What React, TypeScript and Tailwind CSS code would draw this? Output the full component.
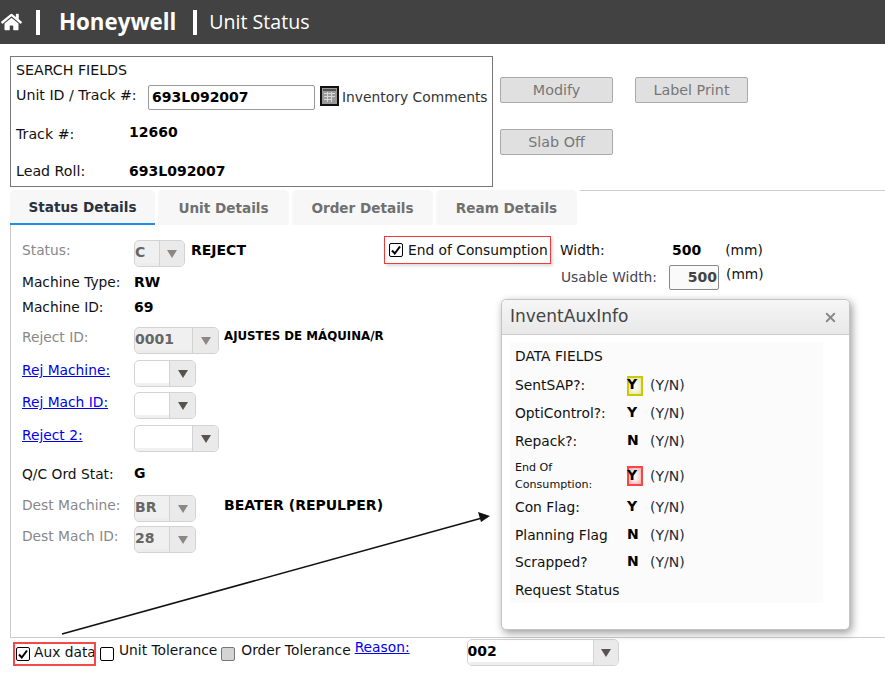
import { FaHome } from "react-icons/fa";
import { X } from "lucide-react";

const font = "font-['DejaVu_Sans',Verdana,sans-serif]";

function Combo({ value, width, arrowAt, disabled }: { value?: string; width: string; arrowAt: string; disabled?: boolean }) {
  return (
    <div className={`flex h-[27px] shrink-0 overflow-hidden rounded-[5px] border border-[#d3d3d3] ${width} ${disabled ? "bg-[#f0f0f0]" : "bg-white"}`}>
      <div className={`flex items-center border-b-[3px] text-[14px] font-bold ${arrowAt} ${disabled ? "border-[#ececec] text-[#666]" : "border-[#f0f0f0] text-black"}`}>{value}</div>
      <div className="flex flex-1 items-center justify-center border-l border-[#d3d3d3] bg-[#eaeaea]">
        <span className={`mt-px h-0 w-0 border-x-[5px] border-t-[8px] border-x-transparent ${disabled ? "border-t-[#8c8783]" : "border-t-[#59534e]"}`} />
      </div>
    </div>
  );
}

function Check({ checked, grey }: { checked?: boolean; grey?: boolean }) {
  return (
    <span className={`flex h-[14px] w-[14px] shrink-0 items-center justify-center rounded-[2px] border ${grey ? "border-[#777] bg-[#d4d4d4]" : "border-black bg-white"}`}>
      {checked && (
        <svg viewBox="0 0 12 12" className="h-3 w-3">
          <path d="M2 6.5 L4.8 9.5 L10 2.5" fill="none" stroke="black" strokeWidth="2" />
        </svg>
      )}
    </span>
  );
}

function AuxRow({ label, value, box, rowClass }: { label: React.ReactNode; value: string; box?: string; rowClass: string }) {
  return (
    <div className={`flex items-center ${rowClass}`}>
      <div className="w-[112px] shrink-0">{label}</div>
      <div className={`flex h-[20px] w-[16px] shrink-0 items-center pb-[2px] text-[14px] font-bold text-black ${box ?? ""}`}>{value}</div>
      <div className="ml-[7px] text-[14px] text-[#1d2a3a]">(Y/N)</div>
    </div>
  );
}

const tabs = ["Unit Details", "Order Details", "Ream Details"];

export default function App() {
  return (
    <div className={`relative h-[690px] w-[885px] overflow-hidden bg-white text-[13.8px] text-[#111] ${font}`}>
      <header className="flex h-[44px] items-center bg-[#424242] text-white">
        <FaHome className="ml-px h-[20px] w-[21px]" />
        <span className="ml-[14px] h-[25px] w-[4px] bg-white" />
        <span className="ml-[19px] font-['Open_Sans',sans-serif] text-[22.3px] font-bold">Honeywell</span>
        <span className="ml-[17px] h-[25px] w-[4px] bg-white" />
        <span className="ml-[12px] font-['Open_Sans',sans-serif] text-[19.6px]">Unit Status</span>
      </header>

      <section className="ml-[10px] mt-[12px] flex h-[131px]">
        <div className="w-[483px] shrink-0 border border-[#777] pl-[5px] text-[14.2px]">
          <div className="mt-[4px] leading-[19px]">SEARCH FIELDS</div>
          <div className="mt-[5px] flex items-center">
            <span className="w-[132px] shrink-0 pb-[3px] whitespace-nowrap">Unit ID / Track #:</span>
            <div className="flex h-[25px] w-[167px] shrink-0 items-center rounded-[2px] border border-[#999] pl-[3px] text-[14px] font-bold text-black">693L092007</div>
            <svg viewBox="0 0 19 20" className="ml-[5px] -mt-[3px] h-[20px] w-[19px] shrink-0">
              <rect width="19" height="20" fill="#111" />
              <rect x="2" y="2" width="15" height="16" fill="#9a9a9a" />
              <rect x="3" y="3" width="13" height="2" fill="#555" />
              <path d="M4 7.5h11M4 10.5h11M4 13.5h8M7.5 6v10M11.5 6v10" stroke="#d8d8d8" strokeWidth="1" />
            </svg>
            <span className="ml-[3px] -mt-[1px] whitespace-nowrap text-[13.85px] text-[#333]">Inventory Comments</span>
          </div>
          <div className="mt-[11px] flex h-[24px] items-center">
            <span className="w-[113px] shrink-0 pt-[3px]">Track #:</span>
            <span className="-mt-[1px] text-[14px] font-bold text-black">12660</span>
          </div>
          <div className="mt-[14px] flex h-[24px] items-center">
            <span className="w-[113px] shrink-0 pt-px">Lead Roll:</span>
            <span className="text-[14px] font-bold text-black">693L092007</span>
          </div>
        </div>
        <div className="ml-[7px] mt-[21px] flex flex-col gap-[26px]">
          <div className="flex gap-[22px]">
            <button className="h-[26px] w-[113px] rounded-[2px] border border-[#aaa] bg-[#e0e0e0] pt-px text-[14.3px] text-[#777]">Modify</button>
            <button className="h-[26px] w-[113px] rounded-[2px] border border-[#aaa] bg-[#e0e0e0] pt-px text-[14.3px] text-[#777]">Label Print</button>
          </div>
          <button className="h-[26px] w-[113px] rounded-[2px] border border-[#aaa] bg-[#e0e0e0] pt-px text-[14.3px] text-[#777]">Slab Off</button>
        </div>
      </section>

      <nav className="ml-[10px] mt-[3px] flex h-[35px] gap-[3px] text-[13.6px] font-bold">
        <div className="flex w-[145px] items-center justify-center rounded-t-[5px] border-b-2 border-[#1e8fe1] bg-[#f7f7f7] pt-[2px] text-[#2a3240]">Status Details</div>
        {tabs.map((t) => (
          <div key={t} className={`flex items-center justify-center rounded-t-[5px] bg-[#f7f7f7] pt-[2px] text-[#707070] ${t === "Unit Details" ? "w-[131px]" : "w-[141px]"}`}>
            {t}
          </div>
        ))}
        <div className="relative flex-1 border-t border-[#ccc]" />
      </nav>

      <main className="ml-[10px] flex h-[413px] border-b border-l border-[#ccc] pl-[11px] pt-[15px]">
        <div className="w-[362px] shrink-0">
          <div className="flex h-[27px]">
            <span className="w-[112px] shrink-0 text-[#888]">Status:</span>
            <Combo value="C" width="w-[51px]" arrowAt="w-[24px]" disabled />
            <span className="ml-[6px] text-[14px] font-bold text-black">REJECT</span>
          </div>
          <div className="mt-[3px] flex h-[24px] items-center">
            <span className="w-[112px] shrink-0">Machine Type:</span>
            <span className="text-[14px] font-bold text-black">RW</span>
          </div>
          <div className="mt-px flex h-[24px] items-center">
            <span className="w-[112px] shrink-0">Machine ID:</span>
            <span className="text-[14px] font-bold text-black">69</span>
          </div>
          <div className="mt-[8px] flex h-[27px]">
            <span className="w-[112px] shrink-0 text-[#888]">Reject ID:</span>
            <Combo value="0001" width="w-[85px]" arrowAt="w-[57px]" disabled />
            <span className="ml-[5px] pt-px text-[11.8px] font-bold whitespace-nowrap text-black">AJUSTES DE MÁQUINA/R</span>
          </div>
          <div className="mt-[6px] flex h-[27px]">
            <a className="w-[112px] shrink-0 text-[#0000ee] underline">Rej Machine:</a>
            <Combo width="w-[62px]" arrowAt="w-[34px]" />
          </div>
          <div className="mt-[5px] flex h-[27px]">
            <a className="w-[112px] shrink-0 text-[#0000ee] underline">Rej Mach ID:</a>
            <Combo width="w-[62px]" arrowAt="w-[34px]" />
          </div>
          <div className="mt-[6px] flex h-[27px]">
            <a className="w-[112px] shrink-0 text-[#0000ee] underline">Reject 2:</a>
            <Combo width="w-[85px]" arrowAt="w-[57px]" />
          </div>
          <div className="mt-[12px] flex h-[20px] items-center">
            <span className="w-[112px] shrink-0">Q/C Ord Stat:</span>
            <span className="pb-[2px] text-[14px] font-bold text-black">G</span>
          </div>
          <div className="mt-[11px] flex h-[27px]">
            <span className="w-[112px] shrink-0 text-[#888]">Dest Machine:</span>
            <Combo value="BR" width="w-[62px]" arrowAt="w-[34px]" disabled />
            <span className="ml-[28px] text-[14px] font-bold whitespace-nowrap text-black">BEATER (REPULPER)</span>
          </div>
          <div className="mt-[4px] flex h-[27px]">
            <span className="w-[112px] shrink-0 text-[#888]">Dest Mach ID:</span>
            <Combo value="28" width="w-[62px]" arrowAt="w-[34px]" disabled />
          </div>
        </div>

        <div className="-mt-[4px] flex h-[28px] w-[167px] shrink-0 items-center border border-[#f03a3a] pl-[4px] shadow-[2px_2px_3px_rgba(0,0,0,0.15)]">
          <Check checked />
          <span className="ml-[5px] whitespace-nowrap">End of Consumption</span>
        </div>

        <div className="ml-[9px] -mt-[4px]">
          <div className="flex h-[28px] items-center">
            <span className="w-[112px]">Width:</span>
            <span className="text-[14px] font-bold text-black">500</span>
            <span className="ml-[24px]">(mm)</span>
          </div>
          <div className="flex h-[26px] items-center">
            <span className="w-[109px] pl-px whitespace-nowrap text-[#445]">Usable Width:</span>
            <span className="flex h-[25px] w-[50px] items-center justify-end rounded-[2px] border border-[#888] bg-[#fafafa] pr-px text-[14px] font-bold text-[#444]">500</span>
            <span className="mb-[5px] ml-[7px]">(mm)</span>
          </div>
        </div>
      </main>

      <footer className="ml-[3px] mt-[4px] flex h-[28px] items-start">
        <div className="ml-[10px] flex h-[24px] w-[83px] items-center overflow-hidden border-2 border-[#f54848] pl-px">
          <Check checked />
          <span className="ml-[4px] -mt-[4px] whitespace-nowrap">Aux data</span>
        </div>
        <div className="ml-[4px] mt-[5px] flex items-center">
          <Check />
          <span className="ml-[5px] -mt-[8px] whitespace-nowrap">Unit Tolerance</span>
          <span className="ml-[4px]"><Check grey /></span>
          <span className="ml-[6px] -mt-[8px] whitespace-nowrap">Order Tolerance</span>
          <a className="ml-[4px] -mt-[14px] whitespace-nowrap text-[#0000ee] underline">Reason:</a>
        </div>
        <div className="ml-[57px] -mt-[3px]">
          <Combo value="002" width="w-[152px]" arrowAt="w-[125px]" />
        </div>
      </footer>

      {/* arrow drawn over the panel, pointing at the aux popup */}
      <svg className="absolute left-0 top-0 h-[690px] w-[885px]" viewBox="0 0 885 690">
        <line x1="62" y1="634" x2="482" y2="518" stroke="#111" strokeWidth="1.6" />
        <path d="M490 516 L478 512 L481 522 Z" fill="#111" />
      </svg>

      <div className="absolute left-[501px] top-[299px] h-[331px] w-[349px] rounded-[5px] border border-[#c4c4c4] bg-white shadow-[2px_3px_8px_rgba(0,0,0,0.4)]">
        <div className="flex h-[35px] items-center justify-between rounded-t-[5px] border-b border-[#ccc] bg-gradient-to-b from-[#f6f6f6] to-[#e8e8e8] pl-[8px] pr-[11px] text-[17px] text-[#444]">
          <span>InventAuxInfo</span>
          <X className="h-[15px] w-[15px] text-[#888]" strokeWidth={3} />
        </div>
        <div className="ml-[8px] mt-[7px] h-[261px] w-[313px] bg-[#fbfbfb] px-[5px] pt-[5px]">
          <div className="flex h-[18px] items-center pt-px">DATA FIELDS</div>
          <AuxRow rowClass="mt-[10px] h-[21px]" label="SentSAP?:" value="Y" box="shadow-[inset_0_0_0_2px_#c9c90a,inset_0_0_5px_3px_#e6e68a]" />
          <AuxRow rowClass="mt-[7px] h-[20px]" label="OptiControl?:" value="Y" />
          <AuxRow rowClass="mt-[8px] h-[20px]" label="Repack?:" value="N" />
          <AuxRow rowClass="mt-[8px] h-[34px]" label={<div className="text-[11.1px] leading-[17px]">End Of<br />Consumption:</div>} value="Y" box="shadow-[inset_0_0_0_2px_#f54848,inset_0_0_5px_3px_#f9a0a0]" />
          <AuxRow rowClass="mt-[4px] h-[20px]" label="Con Flag:" value="Y" />
          <AuxRow rowClass="mt-[8px] h-[20px]" label="Planning Flag" value="N" />
          <AuxRow rowClass="mt-[7px] h-[20px]" label="Scrapped?" value="N" />
          <div className="mt-[8px] flex h-[20px] items-center">Request Status</div>
        </div>
      </div>
    </div>
  );
}
